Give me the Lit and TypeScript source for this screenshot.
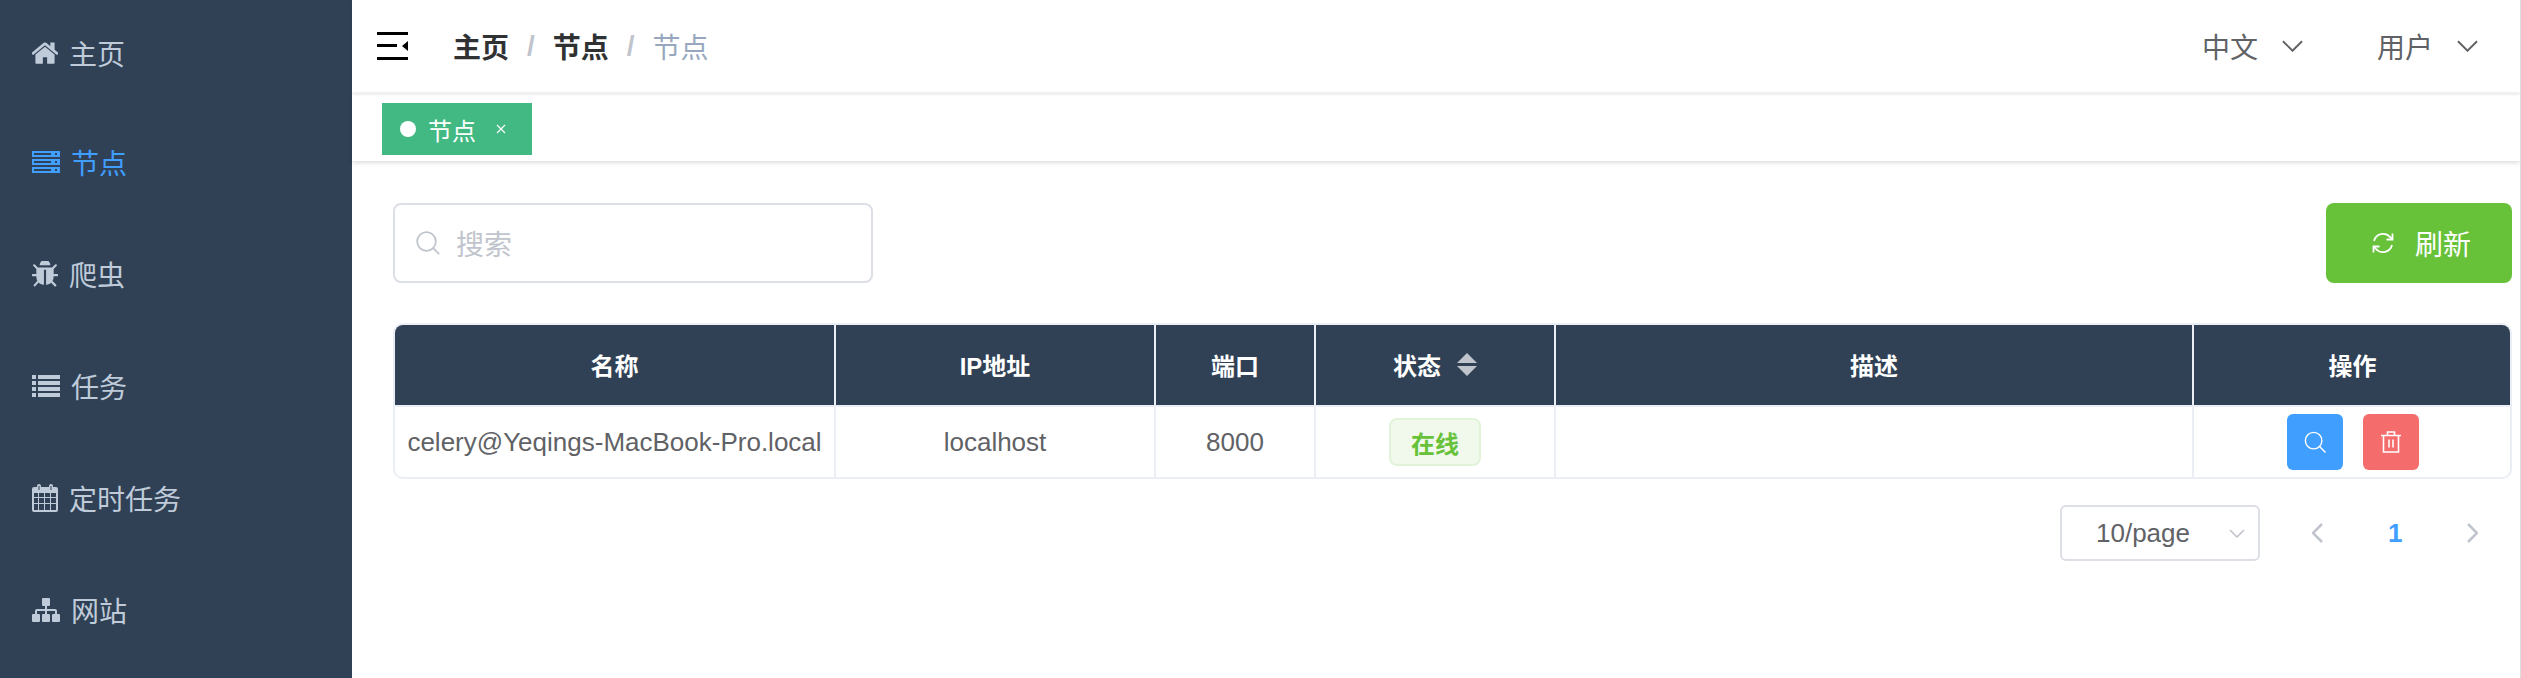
import { LitElement, html, css, svg } from "lit";
import { customElement } from "lit/decorators.js";

const home = svg`<path d="M1472 992v480q0 26-19 45t-45 19h-384v-384h-256v384h-384q-26 0-45-19t-19-45v-480q0-1 .5-3t.5-3l575-474 575 474q1 2 1 6zm223-69l-62 74q-8 9-21 11h-3q-13 0-21-7l-692-577-692 577q-12 8-24 7-13-2-21-11l-62-74q-8-10-7-23.500t11-21.500l719-599q32-26 76-26t76 26l244 204v-195q0-14 9-23t23-9h192q14 0 23 9t9 23v408l219 182q10 8 11 21.500t-7 23.500z"/>`;
const bug = svg`<path d="M1696 960q0 26-19 45t-45 19h-224q0 171-67 290l208 209q19 19 19 45t-19 45q-18 19-45 19t-45-19l-198-197q-5 5-15 13t-42 28.500-65 36.500-82 29-97 13v-896h-128v896q-51 0-101.500-13.500t-87-33-66-39-43.500-32.500l-15-14-183 207q-20 21-48 21-24 0-43-16-19-18-20.500-44.500t15.500-46.500l202-227q-58-114-58-274h-224q-26 0-45-19t-19-45 19-45 45-19h224v-294l-173-173q-19-19-19-45t19-45 45-19 45 19l173 173h844l173-173q19-19 45-19t45 19 19 45-19 45l-173 173v294h224q26 0 45 19t19 45zm-480-576h-640q0-133 93.500-226.500t226.500-93.500 226.500 93.500 93.500 226.500z"/>`;

const menu = [
  { label: "主页", w: 26, h: 22, vb: "128 230 1536 1320", icon: home },
  { label: "节点", w: 28, h: 22, vb: "0 0 28 22", active: true, icon: svg`<path fill-rule="evenodd" d="M0 0h28v6H0zM2 2v2h17V2zM23 2v2h2V2zM0 8h28v6H0zM2 10v2h17v-2zM23 10v2h2v-2zM0 16h28v6H0zM2 18v2h17v-2zM23 18v2h2v-2z"/>` },
  { label: "爬虫", w: 26, h: 26, vb: "128 128 1536 1536", icon: bug },
  { label: "任务", w: 28, h: 22, vb: "0 0 28 22", icon: svg`<path d="M0 0h4v4H0zM6 0h22v4H6zM0 6h4v4H0zM6 6h22v4H6zM0 12h4v4H0zM6 12h22v4H6zM0 18h4v4H0zM6 18h22v4H6z"/>` },
  { label: "定时任务", w: 26, h: 28, vb: "0 0 26 28", icon: svg`<path fill-rule="evenodd" d="M5 3V2a2 2 0 0 1 4 0v1h8V2a2 2 0 0 1 4 0v1h3a2 2 0 0 1 2 2v21a2 2 0 0 1-2 2H2a2 2 0 0 1-2-2V5a2 2 0 0 1 2-2zM6.500 2v4h1V2zM18.500 2v4h1V2zM2 9v4h4V9zM7 9v4h5V9zM13 9v4h5V9zM19 9v4h5V9zM2 14v5h4v-5zM7 14v5h5v-5zM13 14v5h5v-5zM19 14v5h5v-5zM2 20v6h4v-6zM7 20v6h5v-6zM13 20v6h5v-6zM19 20v6h5v-6z"/>` },
  { label: "网站", w: 28, h: 24, vb: "0 0 28 24", icon: svg`<path d="M11 0h6a1 1 0 0 1 1 1v6a1 1 0 0 1-1 1h-2v3h8a2 2 0 0 1 2 2v3h2a1 1 0 0 1 1 1v6a1 1 0 0 1-1 1h-6a1 1 0 0 1-1-1v-6a1 1 0 0 1 1-1h2v-3h-8v3h2a1 1 0 0 1 1 1v6a1 1 0 0 1-1 1h-6a1 1 0 0 1-1-1v-6a1 1 0 0 1 1-1h2v-3H5v3h2a1 1 0 0 1 1 1v6a1 1 0 0 1-1 1H1a1 1 0 0 1-1-1v-6a1 1 0 0 1 1-1h2v-3a2 2 0 0 1 2-2h8V8h-2a1 1 0 0 1-1-1V1a1 1 0 0 1 1-1z"/>` },
];

const chevronDown = html`<svg class="chev" viewBox="0 0 22 12"><path d="M1 1l10 10L21 1" /></svg>`;

const magnifier = html`<svg class="ico" viewBox="0 0 24 24"><circle cx="10.500" cy="10.500" r="9.300"/><path d="M17.200 17.200l6 6"/></svg>`;

@customElement("app-root")
export class AppRoot extends LitElement {
  static styles = css`
    :host {
      display: flex;
      width: 2521px;
      height: 678px;
      overflow: hidden;
      background: #fff;
      font-family: "Liberation Sans", "Noto Sans CJK SC", sans-serif;
      color: #606266;
      box-sizing: border-box;
      border-right: 1px solid #dedede;
    }
    .side {
      width: 352px;
      flex: none;
      background: #304156;
      display: flex;
      flex-direction: column;
      padding-top: 0;
    }
    .item {
      height: 112px;
      flex: none;
      display: flex;
      align-items: center;
      gap: 11px;
      padding-left: 32px;
      font-size: 28px;
      color: #bfcbd9;
    }
    .item:first-child { height: 106px; }
    .item.active { color: #409eff; }
    .item svg { display: block; fill: currentColor; flex: none; }
    .main { flex: 1; min-width: 0; display: flex; flex-direction: column; }
    .nav {
      height: 92px;
      flex: none;
      display: flex;
      align-items: center;
      padding: 0 42px 0 25px;
      box-shadow: 0 2px 4px rgba(0, 21, 41, 0.08);
      position: relative;
    }
    .burger { width: 31px; height: 28px; display: block; flex: none; }
    .crumbs {
      display: flex;
      align-items: center;
      margin-left: 45px;
      font-size: 28px;
      font-weight: 700;
      color: #303133;
    }
    .sep { color: #c0c4cc; font-weight: 700; margin: 0 18px; font-size: 28px; }
    .crumbs .last { font-weight: 400; color: #97a8be; }
    .spacer { flex: 1; }
    .drop { display: flex; align-items: center; gap: 24px; font-size: 28px; }
    .drop + .drop { margin-left: 74px; }
    .chev { width: 21px; height: 12px; fill: none; stroke: #606266; stroke-width: 2; display: block; }
    .tags {
      margin-top: 3px;
      height: 66px;
      flex: none;
      box-sizing: border-box;
      padding: 8px 0 0 30px;
      box-shadow: 0 2px 4px rgba(0, 21, 41, 0.12), 0 0 6px rgba(0, 0, 0, 0.04);
      position: relative;
    }
    .tag {
      width: 150px;
      height: 52px;
      box-sizing: border-box;
      background: #42b983;
      color: #fff;
      font-size: 24px;
      display: flex;
      align-items: center;
      padding-left: 18px;
    }
    .dot { width: 16px; height: 16px; border-radius: 50%; background: #fff; margin-right: 12px; flex: none; }
    .x { width: 10px; height: 10px; margin-left: 20px; stroke: #fff; stroke-width: 1.200; display: block; flex: none; }
    .content { padding: 42px 8px 0 41px; display: flex; flex-direction: column; }
    .filter { display: flex; justify-content: space-between; height: 80px; }
    .search {
      width: 480px;
      box-sizing: border-box;
      border: 2px solid #dcdfe6;
      border-radius: 8px;
      display: flex;
      align-items: center;
      gap: 16px;
      padding-left: 21px;
      font-size: 28px;
      color: #c0c4cc;
    }
    .ico { width: 24px; height: 24px; fill: none; stroke: currentColor; stroke-width: 1.800; display: block; flex: none; }
    .refresh {
      width: 186px;
      box-sizing: border-box;
      background: #67c23a;
      border-radius: 8px;
      color: #fff;
      font-size: 28px;
      display: flex;
      align-items: center;
      gap: 21px;
      padding-left: 46px;
    }
    .refresh svg { width: 22px; height: 22px; fill: none; stroke: #fff; stroke-width: 1.800; display: block; flex: none; }
    .table {
      margin-top: 40px;
      border: 2px solid #ebeef5;
      border-radius: 10px;
      overflow: hidden;
      display: grid;
      grid-template-columns: 439px 320px 160px 240px 638px 319px;
      width: 2119px;
      box-sizing: border-box;
    }
    .th, .td {
      display: flex;
      align-items: center;
      justify-content: center;
      border-left: 2px solid #ebeef5;
      box-sizing: border-box;
    }
    .th:nth-child(6n + 1), .td:nth-child(6n + 1) { border-left: none; }
    .th {
      height: 80px;
      background: #304156;
      color: #fff;
      font-size: 24px;
      font-weight: 700;
      border-bottom: 2px solid #ebeef5;
      height: 82px;
      padding-bottom: 2px;
    }
    .td { height: 70px; font-size: 26px; }
    .sort { display: flex; flex-direction: column; gap: 3px; margin-left: 16px; }
    .sort i { display: block; width: 0; height: 0; border-left: 10px solid transparent; border-right: 10px solid transparent; }
    .sort i:first-child { border-bottom: 10px solid #c0c4cc; }
    .sort i:last-child { border-top: 10px solid #c0c4cc; }
    .pill {
      width: 92px;
      height: 48px;
      box-sizing: border-box;
      background: #f0f9eb;
      border: 2px solid #e1f3d8;
      border-radius: 8px;
      color: #67c23a;
      font-size: 24px;
      font-weight: 700;
      display: flex;
      align-items: center;
      justify-content: center;
    }
    .btns { display: flex; gap: 20px; }
    .btn { width: 56px; height: 56px; border-radius: 6px; color: #fff; display: flex; align-items: center; justify-content: center; }
    .btn.blue { background: #409eff; }
    .btn.red { background: #f56c6c; }
    .btn svg { width: 22px; height: 22px; fill: none; stroke: #fff; stroke-width: 1.600; display: block; }
    .pager { display: flex; align-items: center; margin-top: 26px; justify-content: flex-end; height: 56px; padding-right: 34px; }
    .size {
      width: 200px;
      height: 56px;
      box-sizing: border-box;
      border: 2px solid #dcdfe6;
      border-radius: 6px;
      display: flex;
      align-items: center;
      padding-left: 34px;
      font-size: 26px;
      position: relative;
    }
    .size svg { width: 16px; height: 9px; margin-left: 39px; fill: none; stroke: #c0c4cc; stroke-width: 1.600; display: block; flex: none; }
    .arrow { width: 11px; height: 20px; fill: none; stroke: #c0c4cc; stroke-width: 2.500; display: block; flex: none; }
    .page { color: #409eff; font-size: 26px; font-weight: 700; width: 14px; text-align: center; margin: 0 65px; }
    .pager .arrow.first { margin-left: 52px; }
  `;

  render() {
    return html`
      <aside class="side">
        ${menu.map(
          (m) => html`<div class="item ${m.active ? "active" : ""}">
            <svg width=${m.w} height=${m.h} viewBox=${m.vb}>${m.icon}</svg>
            <span>${m.label}</span>
          </div>`
        )}
      </aside>
      <div class="main">
        <header class="nav">
          <svg class="burger" viewBox="0 0 31 28">
            <path d="M0 0h31v3H0zM0 12h20v3H0zM0 25h31v3H0zM0 0" fill="#000" />
            <path d="M0 6.500" />
            <path d="M25 14l6-5v10z" fill="#000" />
          </svg>
          <nav class="crumbs">
            <span>主页</span><span class="sep">/</span><span>节点</span><span class="sep">/</span>
            <span class="last">节点</span>
          </nav>
          <div class="spacer"></div>
          <div class="drop"><span>中文</span>${chevronDown}</div>
          <div class="drop"><span>用户</span>${chevronDown}</div>
        </header>
        <div class="tags">
          <div class="tag">
            <span class="dot"></span><span>节点</span>
            <svg class="x" viewBox="0 0 10 10"><path d="M1 1l8 8M9 1l-8 8" /></svg>
          </div>
        </div>
        <section class="content">
          <div class="filter">
            <div class="search">${magnifier}<span>搜索</span></div>
            <div class="refresh">
              <svg viewBox="0 0 22 22">
                <path d="M2 9a9.300 9.300 0 0 1 16-4l2 2M20 13a9.300 9.300 0 0 1-16 4l-2-2" />
                <path d="M20.500 1.500v6h-6M1.500 20.500v-6h6" />
              </svg>
              <span>刷新</span>
            </div>
          </div>
          <div class="table">
            <div class="th">名称</div>
            <div class="th">IP地址</div>
            <div class="th">端口</div>
            <div class="th">状态<span class="sort"><i></i><i></i></span></div>
            <div class="th">描述</div>
            <div class="th">操作</div>
            <div class="td">celery@Yeqings-MacBook-Pro.local</div>
            <div class="td">localhost</div>
            <div class="td">8000</div>
            <div class="td"><span class="pill">在线</span></div>
            <div class="td"></div>
            <div class="td">
              <div class="btns">
                <div class="btn blue">
                  <svg viewBox="0 0 24 24"><circle cx="10.500" cy="10.500" r="9" /><path d="M17 17l6.500 6.500" /></svg>
                </div>
                <div class="btn red">
                  <svg viewBox="0 0 22 22">
                    <path d="M1 4.500h20M7.500 4.500V1h7v3.500M3.500 4.500V21h15V4.500M9 8.500v8M13 8.500v8" />
                  </svg>
                </div>
              </div>
            </div>
          </div>
          <div class="pager">
            <div class="size">
              <span>10/page</span>
              <svg viewBox="0 0 16 9"><path d="M1 1l7 7 7-7" /></svg>
            </div>
            <svg class="arrow first" viewBox="0 0 11 20"><path d="M10 1l-9 9 9 9" /></svg>
            <span class="page">1</span>
            <svg class="arrow" viewBox="0 0 11 20"><path d="M1 1l9 9-9 9" /></svg>
          </div>
        </section>
      </div>
    `;
  }
}
